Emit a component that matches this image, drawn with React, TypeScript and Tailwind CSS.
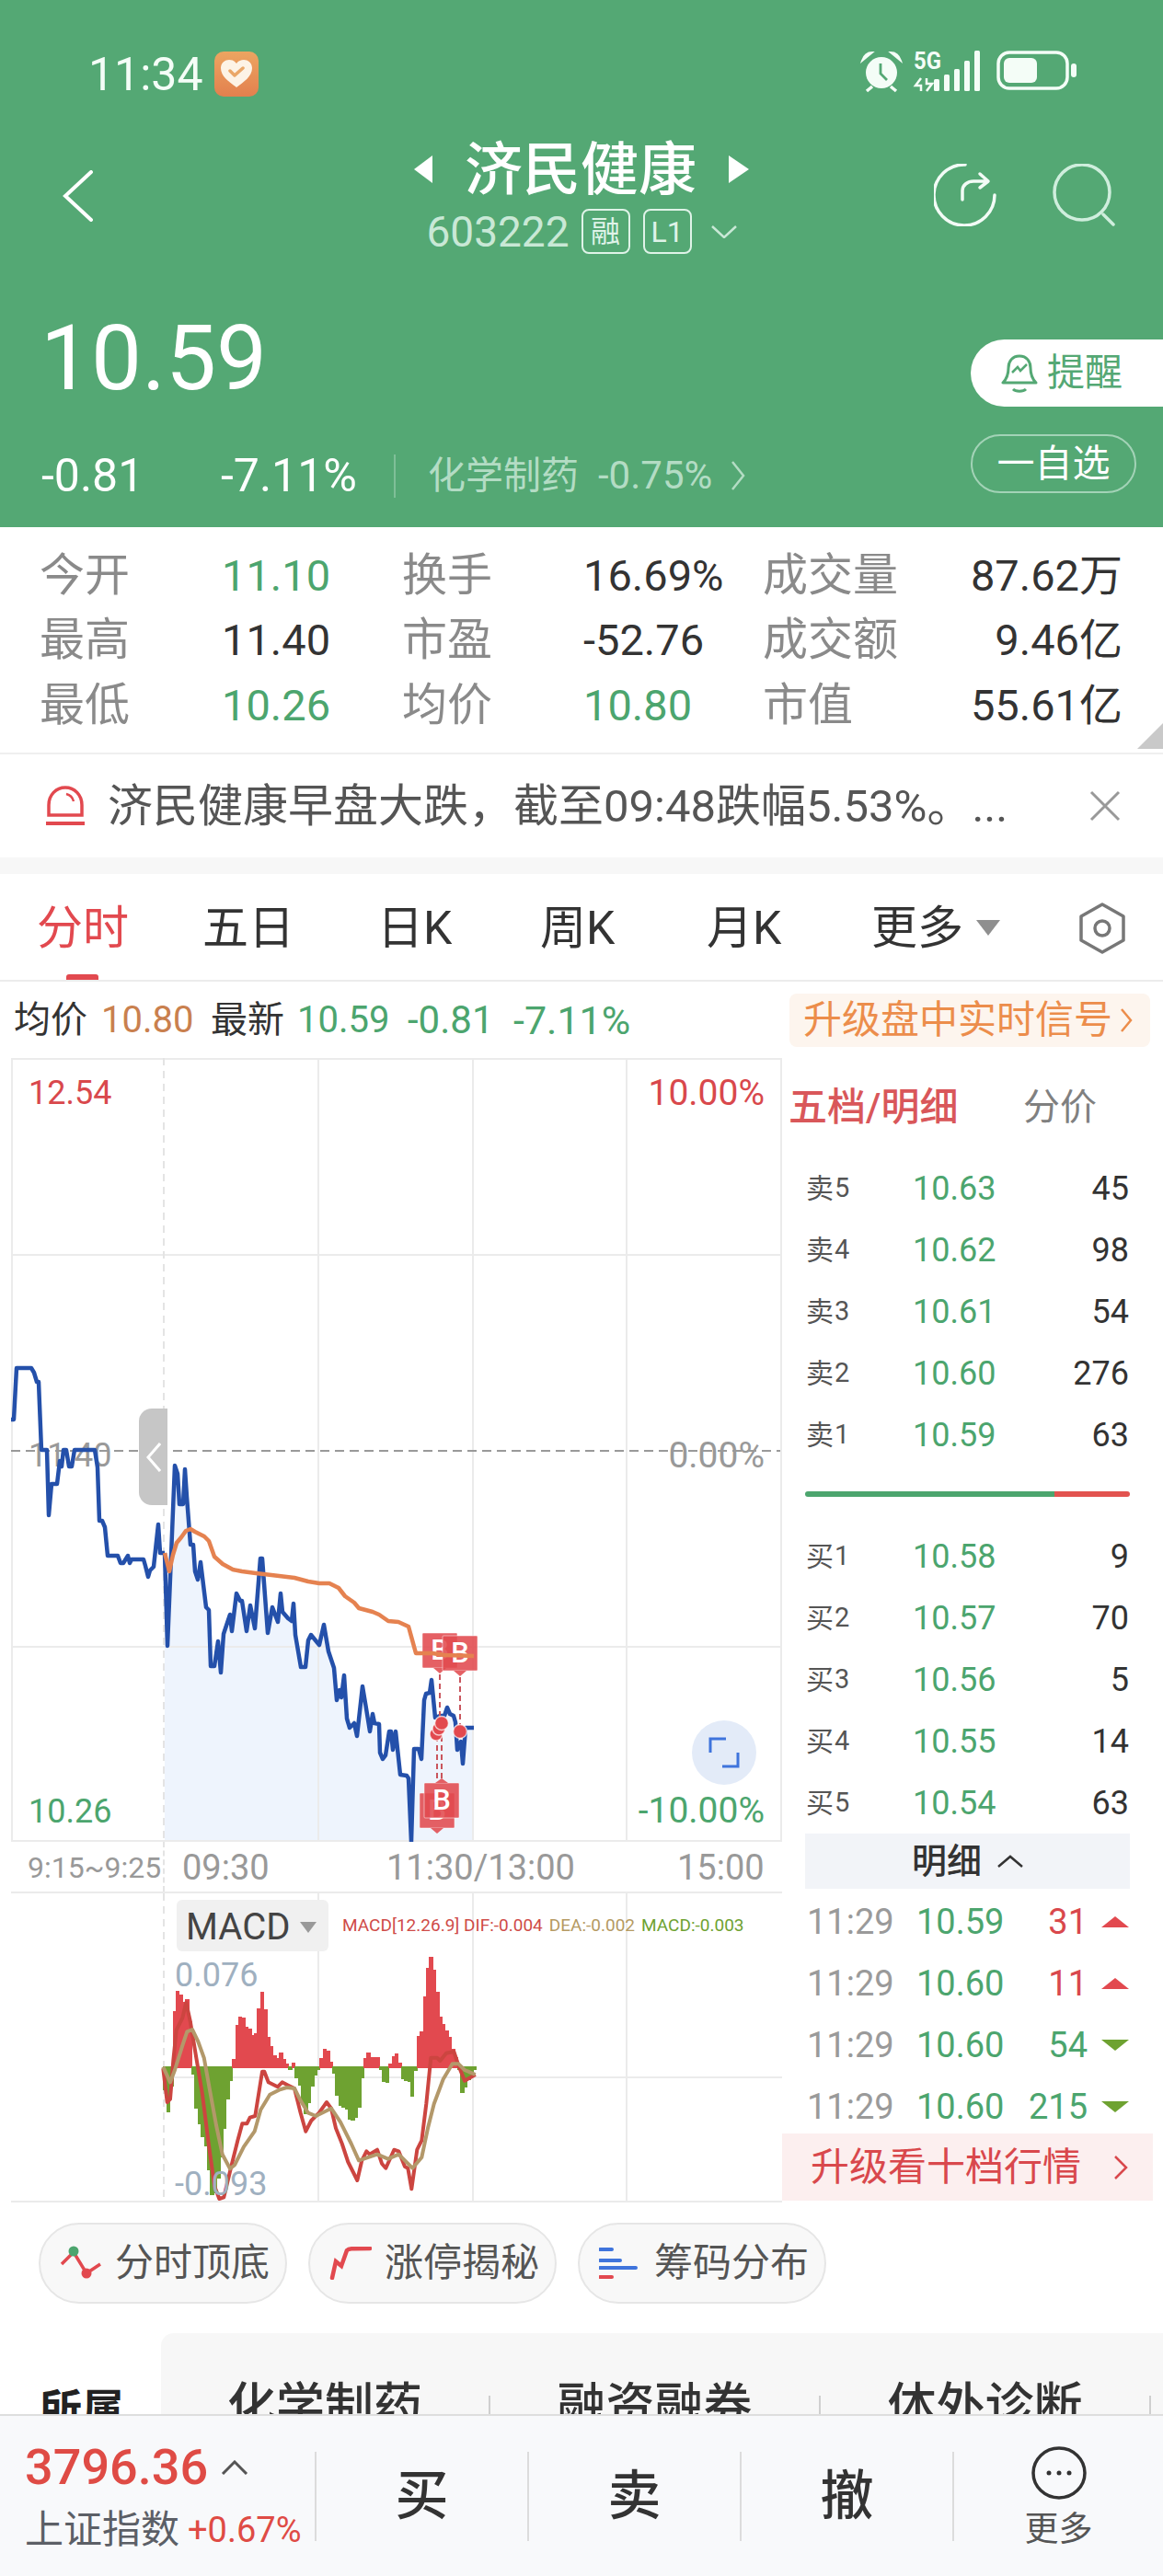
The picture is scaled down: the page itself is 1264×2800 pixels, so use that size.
const pre: number[] = [12,1543,15,1543,18,1487,34,1487,37,1492,40,1502,42,1502,45,1576,51,1576,53,1647,56,1613,62,1613,65,1588,67,1594,69,1576,72,1576,75,1594,78,1594,81,1576,103,1576,106,1595,108,1653,111,1653,114,1660,117,1691,128,1691,131,1699,134,1699,139,1691,141,1699,143,1695,156,1695,158,1702,161,1714,163,1707,167,1703,172,1657,174,1688,179,1688];
const session: number[] = [179,1688,182,1789,190,1593,193,1602,195,1635,199,1635,201,1597,203,1627,207,1679,210,1679,212,1708,215,1717,218,1698,224,1747,227,1750,229,1811,233,1811,237,1784,240,1818,243,1776,250,1755,252,1773,257,1732,261,1740,263,1740,268,1773,272,1745,277,1770,283,1694,285,1694,291,1775,296,1747,302,1763,305,1732,307,1752,313,1759,317,1762,319,1743,321,1777,327,1812,332,1812,335,1783,338,1777,347,1788,352,1766,357,1795,363,1813,366,1848,369,1837,371,1845,374,1821,377,1868,380,1878,385,1873,388,1887,394,1833,398,1857,402,1882,405,1863,407,1873,412,1874,413,1905,416,1912,419,1908,423,1882,425,1882,427,1902,430,1882,435,1929,442,1930,444,1933,447,2002,450,1901,455,1901,458,1912,461,1848,463,1841,467,1840,469,1826,473,1867,478,1865,483,1865,486,1856,489,1863,493,1865,495,1872,497,1902,501,1893,503,1917,506,1878,515,1878];
const avg: number[] = [179,1688,184,1708,188,1690,192,1677,197,1671,202,1664,207,1662,212,1665,222,1670,227,1675,233,1692,242,1700,253,1706,263,1708,278,1710,295,1712,320,1715,335,1719,347,1721,358,1721,368,1726,375,1735,385,1742,390,1748,405,1752,412,1755,422,1762,433,1763,444,1768,452,1797,470,1797,483,1799,515,1800];
const env: number[] = [22,445,30,560,35,610,40,560,48,500,54,290,65,190,80,205,88,230,93,185,100,230,110,300,118,445,122,550,130,580,140,630,150,670,160,700,170,780,175,840,185,875,195,830,205,780,215,700,225,600,235,510,245,470,250,445,255,330,265,290,278,265,290,310,300,310,320,350,335,235,345,185,352,235,360,330,375,375,390,420,403,390,415,415,430,435,437,455,445,425,450,445,455,475,470,510,480,600,490,590,505,510,515,470,530,445,535,420,545,380,555,380,565,410,572,445,580,470,590,550,605,580,615,560,625,610,640,615,655,600,665,540,672,445,680,410,690,392,700,408,725,408,730,445,735,480,750,500,758,445,765,415,780,390,790,415,795,445,800,480,825,490,830,595,835,490,845,445,850,345,865,320,880,130,897,70,905,130,915,200,925,280,940,310,955,340,965,380,980,420,985,445,990,485,998,540,1005,510,1015,485,1030,465,1040,445];
const redLine: number[] = [22,445,35,555,45,545,55,420,65,320,85,280,97,230,110,290,130,410,150,530,170,690,190,830,205,870,220,865,245,760,265,680,280,625,295,625,305,605,322,600,345,455,352,455,365,490,395,505,410,490,430,500,450,510,470,590,487,650,505,615,530,590,555,555,570,575,585,640,605,690,625,750,655,810,670,745,685,715,695,725,720,710,735,755,748,770,775,710,790,715,810,765,820,770,832,838,850,710,865,680,880,560,895,410,915,410,925,420,945,395,970,390,985,435,1005,485,1040,465];
const tanLine: number[] = [22,440,45,490,60,450,85,370,100,325,117,318,135,355,155,410,175,520,195,630,215,725,240,772,255,760,285,700,320,650,340,580,370,530,400,515,425,507,450,510,470,550,495,590,520,600,570,575,600,620,635,690,660,745,720,725,755,740,790,725,835,770,865,735,885,640,905,560,935,480,965,430,985,430,1005,450,1040,465];

const toPts = (a: number[]) => { const o: string[] = []; for (let i = 0; i < a.length; i += 2) o.push(a[i] + ',' + a[i + 1]); return o.join(' '); };
const zoomPts = (a: number[]) => { const o: string[] = []; for (let i = 0; i < a.length; i += 2) o.push((170 + a[i] / 3).toFixed(1) + ',' + (2100 + a[i + 1] / 3).toFixed(1)); return o.join(' '); };
const interp = (x: number) => { for (let i = 0; i < env.length - 2; i += 2) { if (x >= env[i] && x <= env[i + 2]) { const t = (x - env[i]) / (env[i + 2] - env[i] || 1); return env[i + 1] + t * (env[i + 3] - env[i + 1]); } } return 445; };
const bars: { x: number; y: number; h: number; c: string }[] = [];
for (let z = 22; z < 1040; z += 10.2) {
  const v = interp(z + 5);
  const x = 170 + z / 3;
  const up = v < 441;
  const y0 = 2100 + 437 / 3;
  const y1 = 2100 + v / 3;
  if (up) bars.push({ x, y: y1, h: 2100 + 445 / 3 - y1, c: '#e2494f' });
  else bars.push({ x, y: y0, h: Math.max(y1 - y0, 3), c: '#6ea231' });
}

const GREEN = 'text-[#4ca56e]';

function Badge({ x, y, up }: { x: number; y: number; up?: boolean }) {
  return (
    <g>
      <rect x={x} y={y} width="38" height="38" rx="1" fill="#e14a4f" fillOpacity="0.88" stroke="#fff" strokeOpacity="0.5" />
      {up
        ? <polygon points={`${x + 12},${y} ${x + 19},${y - 5} ${x + 26},${y}`} fill="#e14a4f" fillOpacity="0.88" />
        : <polygon points={`${x + 12},${y + 38} ${x + 19},${y + 44} ${x + 26},${y + 38}`} fill="#e14a4f" fillOpacity="0.88" />}
      <text x={x + 19} y={y + 29} textAnchor="middle" fontSize="31" fontWeight="500" fontFamily="Roboto" fill="#fff">B</text>
    </g>
  );
}

function StatRow({ a, b, c, d, e, f, bg, dg }: { a: string; b: string; c: string; d: string; e: string; f: string; bg?: boolean; dg?: boolean }) {
  return (
    <div className="flex h-[70.5px] items-center pl-[43px] pr-[44px] text-[47px] leading-none">
      <div className="w-[198px] text-[49px] text-[#8a8a8a]">{a}</div>
      <div className={`w-[196px] ${bg ? GREEN : 'text-[#333]'}`}>{b}</div>
      <div className="w-[197px] text-[49px] text-[#8a8a8a]">{c}</div>
      <div className={`w-[195px] ${dg ? GREEN : 'text-[#333]'}`}>{d}</div>
      <div className="text-[49px] text-[#8a8a8a]">{e}</div>
      <div className="ml-auto text-[#333]">{f}</div>
    </div>
  );
}

function Quote({ l, p, v }: { l: string; p: string; v: string }) {
  const m = l.match(/^(\D+)(\d)$/);
  return (
    <div className="flex h-[67px] items-center pl-[1px]">
      <div className="flex w-[116px] items-center text-[#555]">
        <span className="text-[30px] leading-none">{m ? m[1] : l}</span>
        <span className="ml-[1px] text-[29px] leading-none">{m ? m[2] : ''}</span>
      </div>
      <div className={`text-[36px] leading-none ${GREEN}`}>{p}</div>
      <div className="ml-auto pr-[1px] text-[36px] leading-none text-[#333]">{v}</div>
    </div>
  );
}

function Detail({ p, v, up }: { p: string; v: string; up: boolean }) {
  return (
    <div className="flex h-[67px] shrink-0 items-center pl-[2px] text-[38px] leading-none">
      <div className="w-[119px] text-[#9a9a9a]">11:29</div>
      <div className={`w-[94px] ${GREEN}`}>{p}</div>
      <div className={`w-[92px] text-right ${up ? 'text-[#d9484c]' : GREEN}`}>{v}</div>
      <svg width="30" height="14" viewBox="0 0 30 14" className="ml-[15px]">
        {up ? <polygon points="0,13 15,1 30,13" fill="#e2494f" /> : <polygon points="0,1 30,1 15,13" fill="#6ea231" />}
      </svg>
    </div>
  );
}

function Chip({ label, icon, w }: { label: string; icon: React.ReactNode; w: string }) {
  return (
    <div className={`flex h-[88px] items-center rounded-full border-2 border-[#e6e6e6] bg-[#f8f8f8] pl-[21px] text-[42px] leading-none text-[#555] ${w}`}>
      <div className="w-[60px] shrink-0">{icon}</div>
      <span className="whitespace-nowrap">{label}</span>
    </div>
  );
}

export default function App() {
  return (
    <div className="relative flex h-[2800px] w-[1264px] flex-col overflow-hidden bg-white font-['Roboto','Noto_Sans_CJK_SC',sans-serif]">
      {/* Header */}
      <div className="flex h-[573px] shrink-0 flex-col bg-[#54a874] text-white">
        <div className="flex h-[152px] shrink-0 items-start justify-between pl-[96px] pr-[94px] pt-[55px]">
          <div className="flex items-center">
            <span className="pt-[2px] text-[50px] leading-[49px] text-[#f4fdf7]">11:34</span>
            <svg width="48" height="49" viewBox="0 0 48 49" className="ml-[12px]">
              <defs>
                <linearGradient id="hg" x1="0" y1="0" x2="0" y2="1">
                  <stop offset="0" stopColor="#eca561" />
                  <stop offset="1" stopColor="#e3804e" />
                </linearGradient>
              </defs>
              <rect width="48" height="49" rx="10" fill="url(#hg)" />
              <path d="M24 39 C16 33 7 27 7 18 C7 12 12 9 16 9 C19 9 22 10 24 13 C26 10 29 9 32 9 C36 9 41 12 41 18 C41 27 32 33 24 39Z" fill="#fdf3e6" />
              <path d="M17 21 L22 26 L31 18" fill="none" stroke="#eaa768" strokeWidth="3.5" strokeLinecap="round" strokeLinejoin="round" />
            </svg>
          </div>
          <svg width="235" height="46" viewBox="935 57 235 46">
            <circle cx="958" cy="81" r="17" fill="#f4fdf7" />
            <path d="M957 71 V82 L964 89" fill="none" stroke="#54a874" strokeWidth="2.8" />
            <path d="M937 68 C939 62 943 59 948 59 Z M979 68 C977 62 973 59 968 59 Z" fill="#f4fdf7" stroke="#f4fdf7" strokeWidth="2" />
            <path d="M948 96 L942 101 M968 96 L974 101" stroke="#f4fdf7" strokeWidth="3.5" />
            <text x="993" y="77" fontSize="26" fontWeight="700" fontFamily="Roboto" fill="#f4fdf7" textLength="30" lengthAdjust="spacingAndGlyphs">5G</text>
            <path d="M1001 87 L995 95 H1001 V101 M1007 101 L1013 93 H1007 V87" fill="none" stroke="#f4fdf7" strokeWidth="2.5" />
            <rect x="1015" y="88" width="6" height="13" rx="1.5" fill="#f4fdf7" />
            <rect x="1026" y="83" width="6" height="18" rx="1.5" fill="#f4fdf7" />
            <rect x="1037" y="77" width="6" height="24" rx="1.5" fill="#f4fdf7" />
            <rect x="1048" y="68" width="6" height="33" rx="1.5" fill="#f4fdf7" />
            <rect x="1059" y="57" width="6" height="44" rx="1.5" fill="#f4fdf7" />
            <rect x="1085" y="59" width="75" height="39" rx="12" fill="none" stroke="#f4fdf7" strokeWidth="3.5" />
            <rect x="1091" y="65" width="36" height="27" rx="6" fill="#f4fdf7" />
            <rect x="1164" y="71" width="6" height="15" rx="3" fill="#f4fdf7" />
          </svg>
        </div>
        <div className="grid h-[135px] shrink-0 grid-cols-[1fr_auto_1fr] items-start">
          <div className="pl-[68px] pt-[33px]">
            <svg width="34" height="56" viewBox="0 0 34 56"><path d="M31 2 L3 28 L31 54" fill="none" stroke="#fff" strokeWidth="4" strokeLinecap="round" /></svg>
          </div>
          <div className="flex flex-col items-center">
            <div className="flex h-[64px] items-center">
              <svg width="20" height="30" viewBox="0 0 20 30"><polygon points="20,0 20,30 0,15" fill="#fff" /></svg>
              <span className="mx-[35px] text-[63px] font-medium leading-none">济民健康</span>
              <svg width="22" height="30" viewBox="0 0 22 30"><polygon points="0,0 0,30 22,15" fill="#fff" /></svg>
            </div>
            <div className="mt-[11px] flex items-center">
              <span className="text-[46px] leading-none text-[#c9e8d6]">603222</span>
              <span className="ml-[13px] flex h-[49px] w-[53px] items-center justify-center rounded-[8px] border-2 border-[#dff3e8] text-[32px] leading-none text-[#dff3e8]">融</span>
              <span className="ml-[14px] flex h-[49px] w-[53px] items-center justify-center rounded-[8px] border-2 border-[#dff3e8] text-[32px] leading-none text-[#dff3e8]">L1</span>
              <svg width="28" height="14" viewBox="0 0 28 14" className="ml-[21px]"><path d="M1 1 L14 13 L27 1" fill="none" stroke="#c9e8d6" strokeWidth="2.5" /></svg>
            </div>
          </div>
          <div className="flex items-start justify-end gap-[61px] pr-[52px] pt-[26px]">
            <svg width="68" height="68" viewBox="1013 177 68 68">
              <path d="M1047 178 A33 33 0 1 0 1079 211" fill="none" stroke="#f2fbf6" strokeWidth="3.5" strokeLinecap="round" />
              <path d="M1044 216 V206 C1044 200 1050 196 1056 196 H1072 M1063 188 L1072 196 L1063 203" fill="none" stroke="#f2fbf6" strokeWidth="3.5" strokeLinecap="round" strokeLinejoin="round" />
            </svg>
            <svg width="68" height="68" viewBox="1145 177 68 68">
              <circle cx="1177" cy="208" r="30" fill="none" stroke="#cfeedd" strokeWidth="3.5" />
              <path d="M1200 232 L1211 243" stroke="#cfeedd" strokeWidth="3.5" strokeLinecap="round" />
            </svg>
          </div>
        </div>
        <div className="flex min-h-0 flex-1 justify-between">
          <div className="flex flex-col">
            <div className="mt-[51px] pl-[44px] text-[98px] font-normal leading-[104px]">10.59</div>
            <div className="mt-[50px] flex items-center pl-[45px] text-[50px] leading-none">
              <span className="w-[195px]">-0.81</span>
              <span className="w-[188px]">-7.11%</span>
              <span className="h-[47px] w-[2px] bg-[#7fbf98]" />
              <span className="ml-[35px] text-[41px] text-[#b3dcc4]">化学制药</span>
              <span className="ml-[21px] text-[42px] text-[#b3dcc4]">-0.75%</span>
              <svg width="16" height="34" viewBox="0 0 16 34" className="ml-[20px]"><path d="M2 2 L14 17 L2 32" fill="none" stroke="#b3dcc4" strokeWidth="2.5" /></svg>
            </div>
          </div>
          <div className="flex w-[209px] flex-col pt-[82px]">
            <div className="flex h-[73px] items-center rounded-l-[37px] bg-white pl-[33px] text-[41px] leading-none text-[#54a874]">
              <svg width="40" height="42" viewBox="0 0 40 42" className="mr-[10px]">
                <path d="M20 2 C12 2 8 8 8 15 C8 23 6 27 2 31 H38 C34 27 32 23 32 15 C32 8 28 2 20 2Z" fill="none" stroke="#54a874" strokeWidth="3" strokeLinejoin="round" />
                <path d="M13 38 C16 41 24 41 27 38" fill="none" stroke="#54a874" strokeWidth="3" />
                <path d="M12 20 L18 14 L21 18 L28 11" fill="none" stroke="#54a874" strokeWidth="2.5" />
              </svg>
              提醒
            </div>
            <div className="mt-[30px] flex h-[64px] w-[180px] items-center justify-center rounded-[32px] border-2 border-[#a3d3b7] text-[41px] leading-none">一自选</div>
          </div>
        </div>
      </div>

      {/* Stats */}
      <div className="relative h-[247px] shrink-0 border-b-2 border-[#efefef] pt-[17px]">
        <StatRow a="今开" b="11.10" c="换手" d="16.69%" e="成交量" f="87.62万" bg />
        <StatRow a="最高" b="11.40" c="市盈" d="-52.76" e="成交额" f="9.46亿" />
        <StatRow a="最低" b="10.26" c="均价" d="10.80" e="市值" f="55.61亿" bg dg />
        <svg width="28" height="28" viewBox="0 0 28 28" className="absolute bottom-[4px] right-0"><polygon points="28,0 28,28 0,28" fill="#c9c9c9" /></svg>
      </div>

      {/* Notice */}
      <div className="flex h-[112px] shrink-0 items-center pl-[50px] text-[49px] leading-none text-[#555]">
        <svg width="42" height="46" viewBox="0 0 42 46">
          <path d="M3 33 V22 C3 11 11 3 21 3 C31 3 39 11 39 22 V33 Z" fill="none" stroke="#e2494f" strokeWidth="3.5" />
          <path d="M22 10 C26 11 29 14 30 18" fill="none" stroke="#e2494f" strokeWidth="2.5" />
          <path d="M0 42 H42" stroke="#e2494f" strokeWidth="4" />
        </svg>
        <span className="ml-[25px] whitespace-nowrap">济民健康早盘大跌，截至09:48跌幅5.53%。...</span>
        <svg width="34" height="34" viewBox="0 0 34 34" className="ml-auto mr-[46px]"><path d="M2 2 L32 32 M32 2 L2 32" stroke="#999" strokeWidth="3" /></svg>
      </div>
      <div className="h-[18px] shrink-0 bg-[#f7f7f7]" />

      {/* Tabs */}
      <div className="relative flex h-[117px] shrink-0 items-center border-b-2 border-[#ececec] pt-[2px] text-[50px] leading-none text-[#333]">
        <div className="ml-[40px] w-[180px] text-[#e2494f]">分时</div>
        <div className="w-[190px]">五日</div>
        <div className="w-[177px]">日K</div>
        <div className="w-[181px]">周K</div>
        <div className="w-[179px]">月K</div>
        <div className="flex items-center">
          更多
          <svg width="26" height="17" viewBox="0 0 26 17" className="ml-[14px]"><polygon points="0,0 26,0 13,17" fill="#8f8f8f" /></svg>
        </div>
        <svg width="52" height="56" viewBox="0 0 52 56" className="ml-auto mr-[40px]">
          <polygon points="26,2 49,15 49,41 26,54 3,41 3,15" fill="none" stroke="#777" strokeWidth="3.5" strokeLinejoin="round" />
          <circle cx="26" cy="28" r="8" fill="none" stroke="#777" strokeWidth="3.5" />
        </svg>
        <div className="absolute bottom-0 left-[72px] h-[6px] w-[35px] rounded-t-[3px] bg-[#e2494f]" />
      </div>

      {/* Info row */}
      <div className="flex h-[83px] shrink-0 items-center pl-[15px] pt-[1px] text-[40px] leading-none">
        <span className="w-[95px] text-[#333]">均价</span>
        <span className="w-[119px] text-[#c9804e]">10.80</span>
        <span className="w-[94px] text-[#333]">最新</span>
        <span className={`w-[120px] ${GREEN}`}>10.59</span>
        <span className={`w-[115px] text-[42px] ${GREEN}`}>-0.81</span>
        <span className={`text-[43px] ${GREEN}`}>-7.11%</span>
        <div className="ml-auto mr-[14px] flex h-[58px] w-[392px] items-center rounded-[8px] bg-[#fdf5ee] pl-[15px] text-[42px] text-[#ec8d4b]">
          升级盘中实时信号
          <svg width="14" height="28" viewBox="0 0 14 28" className="ml-[8px]"><path d="M2 2 L12 14 L2 26" fill="none" stroke="#ec8d4b" strokeWidth="2.5" /></svg>
        </div>
      </div>

      {/* Chart + order book */}
      <div className="flex h-[1244px] shrink-0">
        <div className="ml-[12px] w-[838px] shrink-0">
          <div className="relative h-[852px] text-[36px] leading-none">
            <div className="absolute left-[19px] top-[20px] text-[#d9484c]">12.54</div>
            <div className="absolute right-[19px] top-[19px] text-[39px] text-[#d9484c]">10.00%</div>
            <div className="absolute left-[19px] top-[414px] text-[#999]">11.40</div>
            <div className="absolute right-[19px] top-[413px] text-[39px] text-[#999]">0.00%</div>
            <div className="absolute bottom-[15px] left-[19px] text-[#4ca56e]">10.26</div>
            <div className="absolute bottom-[14px] right-[19px] text-[39px] text-[#4ca56e]">-10.00%</div>
            <svg width="838" height="852" viewBox="12 1150 838 852" className="absolute left-0 top-0">
              <polygon points={`179,2002 ${toPts(session)} 515,2002`} fill="#eef4fd" />
              <g stroke="#ebebeb" strokeWidth="2" fill="none">
                <rect x="13" y="1151" width="836" height="850" />
                <path d="M346 1150 V2002 M514 1150 V2002 M681 1150 V2002 M12 1364 H850 M12 1790 H850" />
              </g>
              <path d="M178 1150 V2002" stroke="#e4e4e4" strokeWidth="2" strokeDasharray="8 6" />
              <path d="M12 1577 H848" stroke="#999" strokeWidth="2" strokeDasharray="10 6" />
              <polyline points={toPts(pre)} fill="none" stroke="#2450aa" strokeWidth="4.5" strokeLinejoin="round" />
              <polyline points={toPts(session)} fill="none" stroke="#2450aa" strokeWidth="4.5" strokeLinejoin="round" />
              <g stroke="#c9555d" strokeWidth="2" strokeDasharray="6 4">
                <path d="M478 1820 V1867 M500 1823 V1877 M475 1887 V1937 M480 1887 V1937" />
              </g>
              <Badge x={459} y={1775} />
              <Badge x={481} y={1778} />
              <Badge x={456} y={1949} />
              <Badge x={461} y={1938} up />
              <polyline points={toPts(avg)} fill="none" stroke="#e58250" strokeWidth="4.5" strokeLinejoin="round" />
              <g fill="#e2494f" stroke="#fff" strokeOpacity="0.7" strokeWidth="1.5">
                <circle cx="474" cy="1885" r="7" />
                <circle cx="477" cy="1879" r="7" />
                <circle cx="480" cy="1873" r="7.5" />
                <circle cx="500" cy="1882" r="7.5" />
              </g>
            </svg>
            <div className="absolute left-[139px] top-[381px] flex h-[105px] w-[31px] items-center justify-center rounded-l-[14px] bg-[#c6c6c6]">
              <svg width="16" height="32" viewBox="0 0 16 32"><path d="M15 1 L2 16 L15 31" fill="none" stroke="#fff" strokeWidth="3" /></svg>
            </div>
            <div className="absolute left-[740px] top-[720px] flex h-[70px] w-[70px] items-center justify-center rounded-full bg-[#e3ebf8]">
              <svg width="34" height="34" viewBox="0 0 34 34"><path d="M2 17 V2 H19 M15 32 H32 V17" fill="none" stroke="#3f74dc" strokeWidth="3" /></svg>
            </div>
          </div>
          <div className="relative flex h-[56px] items-center border-b-2 border-[#ebebeb] pt-[2px] text-[38px] leading-none text-[#999]">
            <div className="ml-[18px] w-[168px] whitespace-nowrap text-[32px]">9:15~9:25</div>
            <div className="w-[222px]">09:30</div>
            <div className="w-[316px]">11:30/13:00</div>
            <div>15:00</div>
            <div className="absolute bottom-0 left-[165px] top-0 w-0 border-l-2 border-dashed border-[#e4e4e4]" />
          </div>
          <div className="relative h-[336px] text-[36px] leading-none">
            <svg width="838" height="336" viewBox="12 2058 838 336" className="absolute left-0 top-0">
              <g stroke="#ebebeb" strokeWidth="2" fill="none">
                <path d="M346 2058 V2394 M514 2058 V2394 M681 2058 V2394 M178 2258 H850 M12 2393 H850" />
              </g>
              <path d="M178 2058 V2394" stroke="#e4e4e4" strokeWidth="2" strokeDasharray="8 6" />
              <g shapeRendering="crispEdges">
                {bars.map((b, i) => <rect key={i} x={b.x} y={b.y} width="4.4" height={b.h} fill={b.c} />)}
              </g>
              <polyline points={zoomPts(redLine)} fill="none" stroke="#cc4540" strokeWidth="4" strokeLinejoin="round" />
              <polyline points={zoomPts(tanLine)} fill="none" stroke="#b3986a" strokeWidth="4" strokeLinejoin="round" />
            </svg>
            <div className="absolute left-[180px] top-[7px] flex h-[56px] w-[165px] items-center rounded-[6px] bg-[#f0f0f0] pl-[10px] pt-[4px] text-[40px] text-[#444]">
              MACD
              <svg width="18" height="12" viewBox="0 0 18 12" className="ml-[11px]"><polygon points="0,0 18,0 9,12" fill="#999" /></svg>
            </div>
            <div className="absolute left-[360px] top-[25px] flex whitespace-nowrap text-[19px]">
              <span className="text-[#cf4b48]">MACD[12.26.9] DIF:-0.004</span>
              <span className="ml-[7px] text-[#b59a62]">DEA:-0.002</span>
              <span className="ml-[7px] text-[#6ea231]">MACD:-0.003</span>
            </div>
            <div className="absolute left-[178px] top-[71px] text-[#9fb0c0]">0.076</div>
            <div className="absolute left-[178px] top-[298px] text-[#9fb0c0]">-0.093</div>
          </div>
        </div>

        <div className="flex w-[403px] shrink-0 flex-col">
          <div className="flex h-[108px] shrink-0 items-center pl-[7px] leading-none">
            <span className="w-[255px] text-[42px] font-medium text-[#d9575a]">五档/明细</span>
            <span className="text-[40px] text-[#808080]">分价</span>
          </div>
          <div className="px-[25px]">
            <Quote l="卖5" p="10.63" v="45" />
            <Quote l="卖4" p="10.62" v="98" />
            <Quote l="卖3" p="10.61" v="54" />
            <Quote l="卖2" p="10.60" v="276" />
            <Quote l="卖1" p="10.59" v="63" />
            <div className="mb-[31px] mt-[28px] flex h-[6px] overflow-hidden rounded-[3px]">
              <div className="w-[271px] bg-[#4ca56e]" />
              <div className="flex-1 bg-[#e2534f]" />
            </div>
            <Quote l="买1" p="10.58" v="9" />
            <Quote l="买2" p="10.57" v="70" />
            <Quote l="买3" p="10.56" v="5" />
            <Quote l="买4" p="10.55" v="14" />
            <Quote l="买5" p="10.54" v="63" />
            <div className="flex h-[60px] items-center justify-center bg-[#f2f4f8] text-[38px] font-medium leading-none text-[#333]">
              明细
              <svg width="28" height="14" viewBox="0 0 28 14" className="ml-[17px]"><path d="M1 13 L14 2 L27 13" fill="none" stroke="#333" strokeWidth="2.5" /></svg>
            </div>
            <div className="mb-[14px] flex h-[252px] flex-col overflow-hidden pt-[2px]">
              <Detail p="10.59" v="31" up />
              <Detail p="10.60" v="11" up />
              <Detail p="10.60" v="54" up={false} />
              <Detail p="10.60" v="215" up={false} />
            </div>
          </div>
          <div className="flex h-[73px] shrink-0 items-center bg-[#fcefef] pl-[31px] pr-[27px] text-[42px] leading-none text-[#d9484c]">
            升级看十档行情
            <svg width="16" height="30" viewBox="0 0 16 30" className="ml-auto"><path d="M2 3 L14 15 L2 27" fill="none" stroke="#d9484c" strokeWidth="2.5" /></svg>
          </div>
        </div>
      </div>

      {/* Chips */}
      <div className="flex h-[142px] shrink-0 items-start gap-[23px] pl-[42px] pt-[22px]">
        <Chip w="w-[270px]" label="分时顶底" icon={
          <svg width="46" height="38" viewBox="0 0 46 38">
            <path d="M2 20 L15 7 L29 30 L44 20" fill="none" stroke="#e2494f" strokeWidth="3.5" />
            <circle cx="15" cy="6" r="5.5" fill="#4ca56e" />
            <circle cx="29" cy="30" r="5.5" fill="#e2494f" />
          </svg>
        } />
        <Chip w="w-[270px]" label="涨停揭秘" icon={
          <svg width="46" height="36" viewBox="0 0 46 36">
            <path d="M3 34 L7 16 L13 21 L19 4 C21 2 22 2 44 2" fill="none" stroke="#e2494f" strokeWidth="4.5" strokeLinecap="round" />
          </svg>
        } />
        <Chip w="w-[270px]" label="筹码分布" icon={
          <svg width="42" height="36" viewBox="0 0 42 36">
            <path d="M1 3 H14 M1 15 H23 M1 23 H40" stroke="#3f74dc" strokeWidth="4" strokeLinecap="round" />
            <path d="M1 33 H14" stroke="#e2494f" strokeWidth="4" strokeLinecap="round" />
          </svg>
        } />
      </div>

      {/* Clipped section tabs */}
      <div className="flex h-[88px] shrink-0 overflow-hidden">
        <div className="w-[175px] shrink-0 pl-[43px] pt-[60px] text-[46px] font-bold leading-none text-[#222]">所属</div>
        <div className="flex flex-1 rounded-tl-[14px] bg-[#f7f7f7] pt-[54px] text-[53px] font-medium leading-none text-[#333]">
          <div className="w-[356px] text-center">化学制药</div>
          <div className="mt-[14px] h-[30px] w-[2px] bg-[#cfcfcf]" />
          <div className="w-[357px] text-center">融资融券</div>
          <div className="mt-[14px] h-[30px] w-[2px] bg-[#cfcfcf]" />
          <div className="w-[357px] text-center">体外诊断</div>
          <div className="mt-[14px] h-[30px] w-[2px] bg-[#cfcfcf]" />
        </div>
      </div>

      {/* Footer */}
      <div className="flex min-h-0 flex-1 items-center border-t-2 border-[#dedede] bg-[#f8f9fb] leading-none">
        <div className="flex h-[97px] w-[344px] shrink-0 flex-col justify-center border-r-2 border-[#dcdcdc] pl-[27px]">
          <div className="flex items-center">
            <span className="text-[54px] font-medium text-[#df4b45]">3796.36</span>
            <svg width="30" height="16" viewBox="0 0 30 16" className="ml-[14px]"><path d="M2 15 L15 2 L28 15" fill="none" stroke="#555" strokeWidth="3" /></svg>
          </div>
          <div className="mt-[20px] flex items-center">
            <span className="text-[42px] text-[#5c5f66]">上证指数</span>
            <span className="ml-[9px] text-[38px] text-[#df4b45]">+0.67%</span>
          </div>
        </div>
        <div className="flex h-[97px] w-[231px] items-center justify-center border-r-2 border-[#dcdcdc] text-[58px] font-medium text-[#333]">买</div>
        <div className="flex h-[97px] w-[231px] items-center justify-center border-r-2 border-[#dcdcdc] text-[58px] font-medium text-[#333]">卖</div>
        <div className="flex h-[97px] w-[231px] items-center justify-center border-r-2 border-[#dcdcdc] text-[58px] font-medium text-[#333]">撤</div>
        <div className="flex flex-1 flex-col items-center">
          <svg width="60" height="58" viewBox="0 0 60 58">
            <ellipse cx="30" cy="29" rx="28" ry="27" fill="none" stroke="#333" strokeWidth="3.5" />
            <circle cx="19" cy="29" r="2.5" fill="#333" /><circle cx="30" cy="29" r="2.5" fill="#333" /><circle cx="41" cy="29" r="2.5" fill="#333" />
          </svg>
          <span className="mt-[14px] text-[37px] text-[#555]">更多</span>
        </div>
      </div>
    </div>
  );
}
